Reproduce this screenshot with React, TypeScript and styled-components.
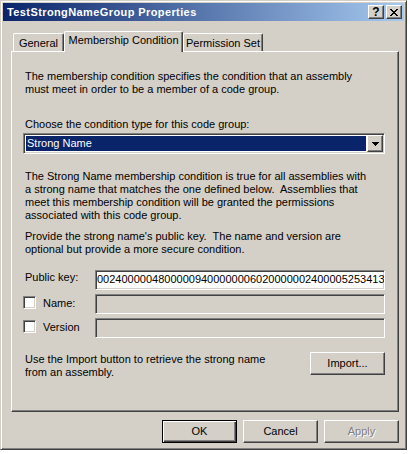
import React from "react";
import styled, { createGlobalStyle, css } from "styled-components";

const FACE = "#d4d0c8";

const Global = createGlobalStyle`
  html, body { margin: 0; padding: 0; background: #ffffff; }
  body {
    font-family: "Liberation Sans", Arial, sans-serif;
    font-size: 11px;
    color: #000;
  }
  * { box-sizing: border-box; }
`;

const raised = css`
  border: 1px solid;
  border-color: #ffffff #404040 #404040 #ffffff;
  box-shadow: inset -1px -1px #808080;
`;

const sunken = css`
  border: 1px solid;
  border-color: #808080 #ffffff #ffffff #808080;
  box-shadow: inset 1px 1px #404040, inset -1px -1px ${FACE};
`;

const Window = styled.div`
  width: 407px;
  height: 450px;
  background: ${FACE};
  border: 1px solid;
  border-color: ${FACE} #404040 #404040 ${FACE};
  box-shadow: inset 1px 1px #ffffff, inset -1px -1px #808080;
  padding: 2px;
  display: flex;
  flex-direction: column;
`;

const TitleBar = styled.div`
  height: 18px;
  flex: none;
  background: linear-gradient(to right, #0a246a, #a6caf0);
  display: flex;
  align-items: center;
  padding: 0 2px 0 4px;
`;

const Title = styled.div`
  flex: 1;
  color: #ffffff;
  font-weight: bold;
  font-size: 11px;
  line-height: 13px;
  letter-spacing: 0.4px;
  white-space: nowrap;
`;

const CaptionButton = styled.div<{ $gap?: number }>`
  ${raised};
  background: ${FACE};
  width: 16px;
  height: 14px;
  margin-left: ${(p) => p.$gap ?? 0}px;
  display: flex;
  align-items: center;
  justify-content: center;
  font-weight: bold;
  font-size: 12px;
  line-height: 12px;
  color: #000;
`;

const Body = styled.div`
  flex: 1;
  display: flex;
  flex-direction: column;
  padding: 10px 5px 4px 8px;
`;

const TabRow = styled.div`
  height: 20px;
  flex: none;
  display: flex;
  align-items: flex-end;
  padding-left: 2px;
`;

const Tab = styled.div<{ $active?: boolean; $w: number }>`
  position: relative;
  z-index: ${(p) => (p.$active ? 2 : 1)};
  width: ${(p) => p.$w}px;
  height: ${(p) => (p.$active ? 21 : 18)}px;
  margin-bottom: ${(p) => (p.$active ? -1 : 0)}px;
  background: ${FACE};
  border-left: 1px solid #ffffff;
  border-top: 1px solid #ffffff;
  border-right: 1px solid #404040;
  border-radius: 2px 2px 0 0;
  box-shadow: inset -1px 0 #808080;
  padding-top: ${(p) => (p.$active ? 2 : 3)}px;
  line-height: 13px;
  text-align: center;
  white-space: nowrap;
`;

const Panel = styled.div`
  flex: 1;
  position: relative;
  z-index: 1;
  background: ${FACE};
  ${raised};
  padding: 18px 13px 0 11px;
  display: flex;
  flex-direction: column;
`;

const Text = styled.div<{ $mt?: number }>`
  margin-top: ${(p) => p.$mt ?? 0}px;
  margin-left: 2px;
  line-height: 13px;
  white-space: nowrap;
`;

const Combo = styled.div<{ $mt?: number }>`
  ${sunken};
  margin-top: ${(p) => p.$mt ?? 0}px;
  height: 21px;
  background: #ffffff;
  display: flex;
  padding: 1px;
`;

const ComboValue = styled.div`
  flex: 1;
  margin: 1px;
  background: #0a246a;
  color: #ffffff;
  line-height: 15px;
  padding-left: 1px;
`;

const DropButton = styled.div`
  ${raised};
  background: ${FACE};
  width: 16px;
  height: 17px;
  display: flex;
  align-items: center;
  justify-content: center;
`;

const FieldRow = styled.div<{ $mt?: number }>`
  margin-top: ${(p) => p.$mt ?? 0}px;
  display: grid;
  grid-template-columns: 72px 1fr;
  align-items: start;
`;

const FieldLabel = styled.div<{ $pt: number }>`
  display: flex;
  align-items: flex-start;
  gap: 5px;
  padding-top: ${(p) => p.$pt}px;
  line-height: 13px;
  white-space: nowrap;
`;

const LabelText = styled.span<{ $pt?: number }>`
  padding-top: ${(p) => p.$pt ?? 0}px;
  margin-left: 2px;
`;

const CheckBox = styled.div`
  ${sunken};
  width: 13px;
  height: 13px;
  background: #ffffff;
  flex: none;
`;

const Edit = styled.div<{ $disabled?: boolean }>`
  ${sunken};
  height: 20px;
  background: ${(p) => (p.$disabled ? FACE : "#ffffff")};
  padding: 0 1px;
  line-height: 16px;
  white-space: nowrap;
  overflow: hidden;
`;

const ImportRow = styled.div<{ $mt?: number }>`
  margin-top: ${(p) => p.$mt ?? 0}px;
  display: flex;
  justify-content: space-between;
  align-items: flex-start;
`;

const ImportText = styled(Text)`
  margin-top: 1px;
`;

const Button = styled.div<{ $default?: boolean; $disabled?: boolean }>`
  width: 75px;
  height: 23px;
  background: ${FACE};
  display: flex;
  align-items: center;
  justify-content: center;
  line-height: 13px;
  color: ${(p) => (p.$disabled ? "#808080" : "#000")};
  text-shadow: ${(p) => (p.$disabled ? "1px 1px #ffffff" : "none")};
  ${(p) =>
    p.$default
      ? css`
          border: 1px solid #000;
          box-shadow: inset 1px 1px #ffffff, inset -1px -1px #404040,
            inset -2px -2px #808080;
        `
      : raised};
`;

const ButtonRow = styled.div`
  flex: none;
  margin-top: 8px;
  display: flex;
  justify-content: flex-end;
  gap: 6px;
`;

const CloseGlyph = () => (
  <svg width="8" height="7" viewBox="0 0 8 7" shapeRendering="crispEdges">
    <path
      fill="#000"
      d="M0 0h2v1H0zM6 0h2v1H6zM1 1h2v1H1zM5 1h2v1H5zM2 2h4v1H2zM3 3h2v1H3zM2 4h4v1H2zM1 5h2v1H1zM5 5h2v1H5zM0 6h2v1H0zM6 6h2v1H6z"
    />
  </svg>
);

const DownArrow = () => (
  <svg width="7" height="4" viewBox="0 0 7 4" shapeRendering="crispEdges">
    <path fill="#000" d="M0 0h7v1H0zM1 1h5v1H1zM2 2h3v1H2zM3 3h1v1H3z" />
  </svg>
);

const KEY = "00240000048000009400000006020000002400005253413";

export default function App() {
  return (
    <>
      <Global />
      <Window>
        <TitleBar>
          <Title>TestStrongNameGroup Properties</Title>
          <CaptionButton>?</CaptionButton>
          <CaptionButton $gap={2}>
            <CloseGlyph />
          </CaptionButton>
        </TitleBar>
        <Body>
          <TabRow>
            <Tab $w={51}>General</Tab>
            <Tab $w={119} $active>
              Membership Condition
            </Tab>
            <Tab $w={80}>Permission Set</Tab>
          </TabRow>
          <Panel>
            <Text>
              The membership condition specifies the condition that an assembly
              <br />
              must meet in order to be a member of a code group.
            </Text>
            <Text $mt={22}>Choose the condition type for this code group:</Text>
            <Combo $mt={2}>
              <ComboValue>Strong Name</ComboValue>
              <DropButton>
                <DownArrow />
              </DropButton>
            </Combo>
            <Text $mt={16}>
              The Strong Name membership condition is true for all assemblies with
              <br />
              a strong name that matches the one defined below.&nbsp; Assemblies that
              <br />
              meet this membership condition will be granted the permissions
              <br />
              associated with this code group.
            </Text>
            <Text $mt={8}>
              Provide the strong name's public key.&nbsp; The name and version are
              <br />
              optional but provide a more secure condition.
            </Text>
            <FieldRow $mt={14}>
              <FieldLabel $pt={1}>
                <LabelText>Public key:</LabelText>
              </FieldLabel>
              <Edit>{KEY}</Edit>
            </FieldRow>
            <FieldRow $mt={4}>
              <FieldLabel $pt={2}>
                <CheckBox />
                <LabelText $pt={1}>Name:</LabelText>
              </FieldLabel>
              <Edit $disabled />
            </FieldRow>
            <FieldRow $mt={4}>
              <FieldLabel $pt={2}>
                <CheckBox />
                <LabelText $pt={1}>Version</LabelText>
              </FieldLabel>
              <Edit $disabled />
            </FieldRow>
            <ImportRow $mt={14}>
              <ImportText>
                Use the Import button to retrieve the strong name
                <br />
                from an assembly.
              </ImportText>
              <Button>Import...</Button>
            </ImportRow>
          </Panel>
          <ButtonRow>
            <Button $default>OK</Button>
            <Button>Cancel</Button>
            <Button $disabled>Apply</Button>
          </ButtonRow>
        </Body>
      </Window>
    </>
  );
}
